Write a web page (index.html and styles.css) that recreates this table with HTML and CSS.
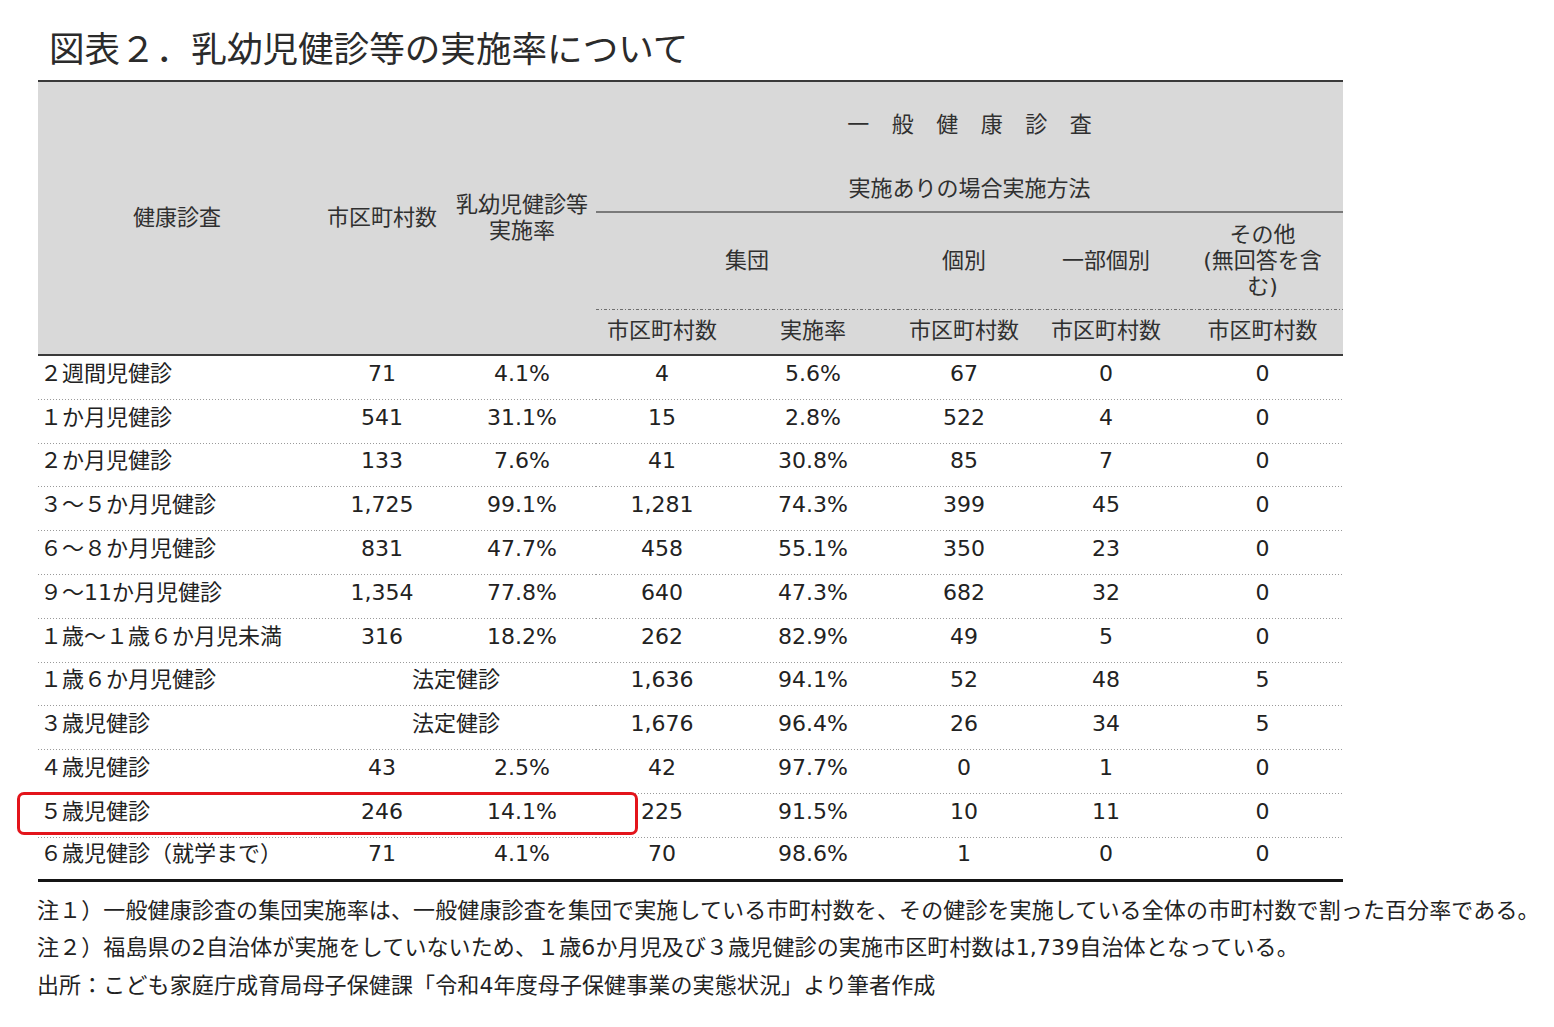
FILE: index.html
```html
<!DOCTYPE html>
<html lang="ja">
<head>
<meta charset="utf-8">
<title>図表２．乳幼児健診等の実施率について</title>
<link rel="stylesheet" href="styles.css">
</head>
<body>
<div class="sheet">
  <h1 class="title">図表２．乳幼児健診等の実施率について</h1>
  <table class="stats">
    <colgroup>
      <col class="c-name"><col class="c-num"><col class="c-rate"><col class="c-gnum"><col class="c-grate"><col class="c-ind"><col class="c-part"><col class="c-other">
    </colgroup>
    <thead>
      <tr class="h1">
        <th rowspan="4" class="side">健康診査</th>
        <th rowspan="4" class="side">市区町村数</th>
        <th rowspan="4" class="side multi">乳幼児健診等<br>実施率</th>
        <th colspan="5" class="top"><span class="spaced">一般健康診査</span></th>
      </tr>
      <tr class="h2">
        <th colspan="5" class="method">実施ありの場合実施方法</th>
      </tr>
      <tr class="h3">
        <th colspan="2" class="dash">集団</th>
        <th class="dash">個別</th>
        <th class="dash">一部個別</th>
        <th class="dash multi">その他<br>(無回答を含<br>む)</th>
      </tr>
      <tr class="h4">
        <th class="sub">市区町村数</th>
        <th class="sub">実施率</th>
        <th class="sub">市区町村数</th>
        <th class="sub">市区町村数</th>
        <th class="sub">市区町村数</th>
      </tr>
    </thead>
    <tbody>
      <tr><td>２週間児健診</td><td>71</td><td>4.1%</td><td>4</td><td>5.6%</td><td>67</td><td>0</td><td>0</td></tr>
      <tr><td>１か月児健診</td><td>541</td><td>31.1%</td><td>15</td><td>2.8%</td><td>522</td><td>4</td><td>0</td></tr>
      <tr><td>２か月児健診</td><td>133</td><td>7.6%</td><td>41</td><td>30.8%</td><td>85</td><td>7</td><td>0</td></tr>
      <tr><td>３～５か月児健診</td><td>1,725</td><td>99.1%</td><td>1,281</td><td>74.3%</td><td>399</td><td>45</td><td>0</td></tr>
      <tr><td>６～８か月児健診</td><td>831</td><td>47.7%</td><td>458</td><td>55.1%</td><td>350</td><td>23</td><td>0</td></tr>
      <tr><td>９～11か月児健診</td><td>1,354</td><td>77.8%</td><td>640</td><td>47.3%</td><td>682</td><td>32</td><td>0</td></tr>
      <tr><td>１歳～１歳６か月児未満</td><td>316</td><td>18.2%</td><td>262</td><td>82.9%</td><td>49</td><td>5</td><td>0</td></tr>
      <tr><td>１歳６か月児健診</td><td colspan="2">法定健診</td><td>1,636</td><td>94.1%</td><td>52</td><td>48</td><td>5</td></tr>
      <tr><td>３歳児健診</td><td colspan="2">法定健診</td><td>1,676</td><td>96.4%</td><td>26</td><td>34</td><td>5</td></tr>
      <tr><td>４歳児健診</td><td>43</td><td>2.5%</td><td>42</td><td>97.7%</td><td>0</td><td>1</td><td>0</td></tr>
      <tr><td>５歳児健診</td><td>246</td><td>14.1%</td><td>225</td><td>91.5%</td><td>10</td><td>11</td><td>0</td></tr>
      <tr class="last"><td>６歳児健診（就学まで）</td><td>71</td><td>4.1%</td><td>70</td><td>98.6%</td><td>1</td><td>0</td><td>0</td></tr>
    </tbody>
  </table>
  <div class="notes">
    <p>注１）一般健康診査の集団実施率は、一般健康診査を集団で実施している市町村数を、その健診を実施している全体の市町村数で割った百分率である。</p>
    <p>注２）福島県の2自治体が実施をしていないため、１歳6か月児及び３歳児健診の実施市区町村数は1,739自治体となっている。</p>
    <p>出所：こども家庭庁成育局母子保健課「令和4年度母子保健事業の実態状況」より筆者作成</p>
  </div>
  <div class="highlight"></div>
</div>
</body>
</html>
```

FILE: styles.css
```css
html, body {
  margin: 0;
  padding: 0;
  background: #ffffff;
}

body {
  font-family: "DejaVu Sans", "Noto Sans CJK JP", sans-serif;
  color: #222222;
}

.sheet {
  position: relative;
  width: 1554px;
  min-height: 1027px;
}

.title {
  margin: 0;
  padding: 27px 0 13px 49px;
  font-family: "Noto Sans CJK JP", sans-serif;
  font-size: 35.6px;
  font-weight: normal;
  line-height: 40px;
  color: #2b2b2b;
}

.stats {
  margin-left: 38px;
  width: 1305px;
  table-layout: fixed;
  border-collapse: separate;
  border-spacing: 0;
  font-size: 22px;
}

.c-name { width: 278px; }
.c-num { width: 132px; }
.c-rate { width: 148px; }
.c-gnum { width: 132px; }
.c-grate { width: 170px; }
.c-ind { width: 132px; }
.c-part { width: 152px; }
.c-other { width: 161px; }

.stats th {
  background: #d9d9d9;
  font-weight: normal;
  color: #303030;
  padding: 0;
  text-align: center;
  vertical-align: middle;
  line-height: 26px;
  white-space: nowrap;
}

.h1 { height: 87px; }
.h2 { height: 46px; }
.h3 { height: 97px; }
.h4 { height: 46px; }

.stats th.side {
  border-top: 2px solid #3a3a3a;
  border-bottom: 2px solid #3a3a3a;
}

.stats th.top {
  border-top: 2px solid #3a3a3a;
}

.spaced {
  letter-spacing: 22.5px;
  margin-right: -22.5px;
}

.stats th.method {
  border-bottom: 2px solid #7a7a7a;
}

.stats th.dash {
  background-image: repeating-linear-gradient(to right,
    #6e6e6e 0, #6e6e6e 3px,
    transparent 3px, transparent 5px,
    #6e6e6e 5px, #6e6e6e 6px,
    transparent 6px, transparent 8px);
  background-size: 100% 1px;
  background-position: left bottom;
  background-repeat: no-repeat;
  padding-bottom: 1px;
}

.stats th.sub {
  border-bottom: 2px solid #3a3a3a;
  padding-bottom: 2px;
}

.stats tbody tr {
  height: 43.8px;
}

.stats td {
  padding: 0 0 8px 0;
  text-align: center;
  vertical-align: middle;
  line-height: 26px;
  white-space: nowrap;
  color: #222222;
  background-image: linear-gradient(to right, #9a9a9a 1px, transparent 1px);
  background-size: 3px 1px;
  background-position: left bottom;
  background-repeat: repeat-x;
}

.stats td:first-child {
  text-align: left;
  padding-left: 2px;
}

.stats tr.last td {
  background-image: none;
  border-bottom: 3px solid #151515;
}

.notes {
  margin: 10px 0 0 37px;
  font-size: 22px;
  letter-spacing: 0.12px;
  line-height: 37.5px;
  white-space: nowrap;
  color: #222222;
}

.notes p {
  margin: 0;
}

.highlight {
  position: absolute;
  left: 17px;
  top: 792px;
  width: 621px;
  height: 43px;
  box-sizing: border-box;
  border: 3px solid #e3141b;
  border-radius: 7px;
}
```
